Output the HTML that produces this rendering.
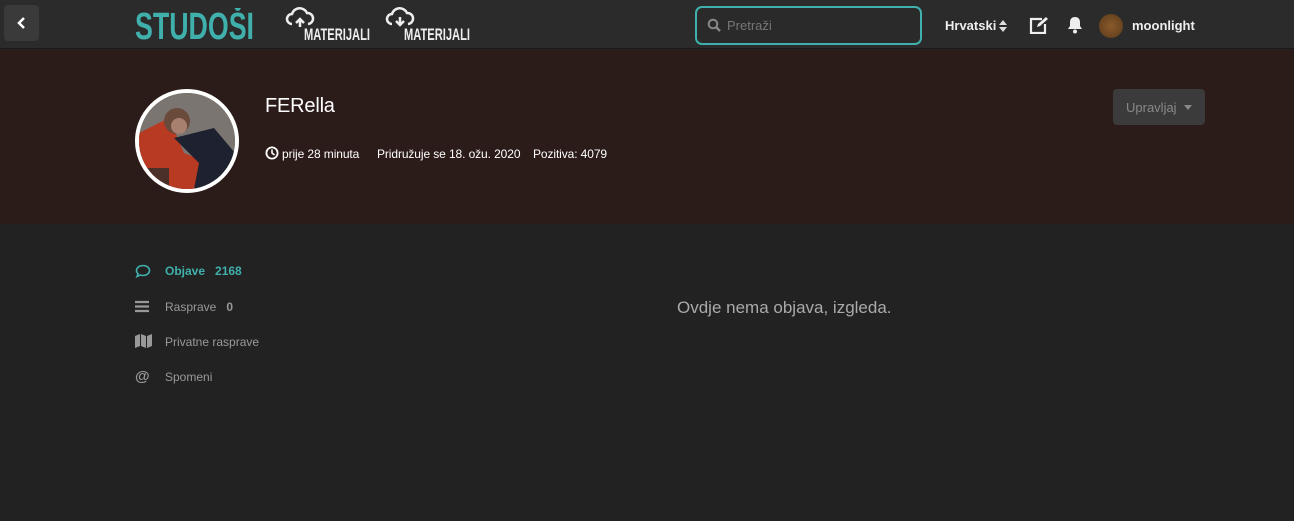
<!DOCTYPE html>
<html><head><meta charset="utf-8"><style>
*{margin:0;padding:0;box-sizing:border-box}
body{width:1294px;height:521px;background:#222222;font-family:"Liberation Sans",sans-serif;position:relative;overflow:hidden;color:#fff}
.hdr{position:absolute;left:0;top:0;width:1294px;height:49px;background:#2b2b2b;border-bottom:1px solid #1f1a1a}
.back{position:absolute;left:4px;top:5px;width:35px;height:36px;background:#3a3a3a;border-radius:4px}
.search{position:absolute;left:695px;top:6px;width:227px;height:39px;border:2px solid #3fb0ac;border-radius:7px;background:#2a2a2a}
.search span{position:absolute;left:30px;top:10px;font-size:13px;color:#777}
.hr{position:absolute;top:18px;font-size:13px;font-weight:bold;color:#eee}
.hero{position:absolute;left:0;top:50px;width:1294px;height:174px;background:#2b1b19}
.av{position:absolute;left:135px;top:89px;width:104px;height:104px;border-radius:50%;border:4px solid #fff;overflow:hidden;background:#5a4a44}
.name{position:absolute;left:265px;top:95px;font-size:20px;color:#fff;letter-spacing:-0.2px}
.meta{position:absolute;top:147px;font-size:12px;color:#fff;letter-spacing:-0.1px}
.btn{position:absolute;left:1113px;top:89px;width:92px;height:36px;background:#3b3b3b;border-radius:4px;color:#888;font-size:13px;padding:11px 0 0 13px}
.nav{position:absolute;left:165px;font-size:12px;color:#999}
.ic{position:absolute;left:135px}
.empty{position:absolute;left:677px;top:298px;font-size:17px;color:#aaa}
</style></head><body>
<div class="hdr">
<div class="back"><svg width="35" height="36"><path d="M20 13l-5 5 5 5" stroke="#fff" stroke-width="2.5" fill="none"/></svg></div>
<svg style="position:absolute;left:135px;top:8px" width="122" height="34"><text x="0" y="31" textLength="119" lengthAdjust="spacingAndGlyphs" font-family="Liberation Sans Narrow, Liberation Sans, sans-serif" font-weight="bold" font-size="38" fill="#3fb0ac">STUDOŠI</text></svg>
<svg style="position:absolute;left:285px;top:5px" width="30" height="24"><path d="M7 19a5 5 0 0 1 0-10 8 8 0 0 1 15-1 5 5 0 0 1 1 11" stroke="#eee" stroke-width="2.5" fill="none"/><path d="M15 22v-8m-4 4l4-4 4 4" stroke="#eee" stroke-width="2.5" fill="none"/></svg>
<svg style="position:absolute;left:304px;top:26px" width="70" height="16"><text x="0" y="14" textLength="66" lengthAdjust="spacingAndGlyphs" font-family="Liberation Sans Narrow, sans-serif" font-weight="bold" font-size="17" fill="#eee">MATERIJALI</text></svg>
<svg style="position:absolute;left:385px;top:5px" width="30" height="24"><path d="M7 19a5 5 0 0 1 0-10 8 8 0 0 1 15-1 5 5 0 0 1 1 11" stroke="#eee" stroke-width="2.5" fill="none"/><path d="M15 12v8m-4-4l4 4 4-4" stroke="#eee" stroke-width="2.5" fill="none"/></svg>
<svg style="position:absolute;left:404px;top:26px" width="70" height="16"><text x="0" y="14" textLength="66" lengthAdjust="spacingAndGlyphs" font-family="Liberation Sans Narrow, sans-serif" font-weight="bold" font-size="17" fill="#eee">MATERIJALI</text></svg>
<div class="search"><svg style="position:absolute;left:10px;top:10px" width="14" height="14"><circle cx="6" cy="6" r="4.3" stroke="#888" stroke-width="2" fill="none"/><path d="M9 9l4 4" stroke="#888" stroke-width="2.5"/></svg><span>Pretraži</span></div>
<div class="hr" style="left:945px">Hrvatski</div>
<svg style="position:absolute;left:998px;top:19px" width="10" height="14"><path d="M1 6l4-5 4 5zM1 8l4 5 4-5z" fill="#ddd"/></svg>
<svg style="position:absolute;left:1029px;top:16px" width="20" height="18"><path d="M13 3H2v14h14V8" stroke="#eee" stroke-width="2.2" fill="none"/><path d="M8 11l1-3 8-7 2 2-8 7z" fill="#eee"/></svg>
<svg style="position:absolute;left:1067px;top:16px" width="16" height="18"><path d="M8 1c-3 0-5 2-5 5v4l-2 3h14l-2-3V6c0-3-2-5-5-5z" fill="#eee"/><circle cx="8" cy="15.5" r="2" fill="#eee"/></svg>
<div style="position:absolute;left:1099px;top:14px;width:24px;height:24px;border-radius:50%;background:radial-gradient(circle,#8a5a2a,#5a3a1a)"></div>
<div class="hr" style="left:1132px">moonlight</div>
</div>
<div class="hero"></div>
<div class="av"><svg width="96" height="96" viewBox="0 0 96 96">
<rect width="96" height="96" fill="#7a7570"/>
<path d="M0 40 L30 25 L45 60 L70 70 L60 96 L0 96z" fill="#b83a22"/>
<path d="M35 45 L75 35 L96 60 L96 96 L55 96 L60 70z" fill="#1e2230"/>
<circle cx="38" cy="28" r="13" fill="#6a4a3a"/>
<circle cx="40" cy="33" r="8" fill="#a88070"/>
<rect x="0" y="75" width="30" height="21" fill="#4a3028"/>
</svg></div>
<div class="name">FERella</div>
<svg style="position:absolute;left:265px;top:146px" width="14" height="14"><circle cx="7" cy="7" r="5.6" stroke="#fff" stroke-width="1.8" fill="none"/><path d="M7 3.5V7l2.5 2" stroke="#fff" stroke-width="1.6" fill="none"/></svg>
<div class="meta" style="left:282px">prije 28 minuta</div>
<div class="meta" style="left:377px">Pridružuje se 18. ožu. 2020</div>
<div class="meta" style="left:533px">Pozitiva: 4079</div>
<div class="btn">Upravljaj <span style="display:inline-block;margin-left:4px;border:4px solid transparent;border-top:5px solid #888;vertical-align:-2px"></span></div>
<svg class="ic" style="top:264px" width="16" height="14"><path d="M8 1.5c-3.8 0-6.5 2.2-6.5 5 0 1.3.6 2.4 1.6 3.3L2 12.5l3.3-1.5c.8.3 1.7.5 2.7.5 3.8 0 6.5-2.2 6.5-5s-2.7-5-6.5-5z" stroke="#3fb0ac" stroke-width="1.6" fill="none"/></svg>
<div class="nav" style="top:264px;color:#3fb0ac;font-weight:bold">Objave &nbsp;&nbsp;2168</div>
<svg class="ic" style="top:300px" width="15" height="13"><path d="M0 2h14M0 6.5h14M0 11h14" stroke="#999" stroke-width="2.2"/></svg>
<div class="nav" style="top:300px">Rasprave &nbsp;&nbsp;<b>0</b></div>
<svg class="ic" style="top:334px" width="17" height="14"><path d="M0 2l5-2v12l-5 2zM6 0l5 2v12l-5-2zM12 2l5-2v12l-5 2z" fill="#999"/></svg>
<div class="nav" style="top:335px">Privatne rasprave</div>
<div class="nav" style="top:368px;left:135px;font-size:15px;font-weight:bold">@</div>
<div class="nav" style="top:370px">Spomeni</div>
<div class="empty">Ovdje nema objava, izgleda.</div>
</body></html>
